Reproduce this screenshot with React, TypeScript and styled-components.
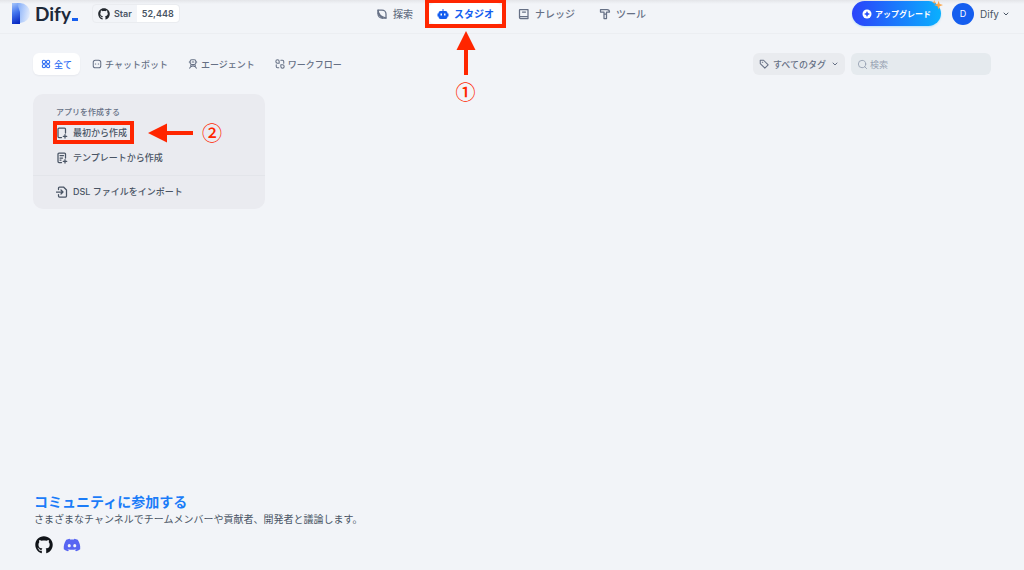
import React from "react";
import styled, { createGlobalStyle, css } from "styled-components";
import { FaGithub, FaDiscord } from "react-icons/fa";
import { ChevronDown, Search } from "lucide-react";

const GlobalStyle = createGlobalStyle`
  *, *::before, *::after { box-sizing: border-box; }
  body {
    margin: 0;
    background: #f2f4f8;
    color: #495464;
    font-family: Inter, "Noto Sans CJK JP", sans-serif;
    font-size: 9px;
  }
  button, input, select { font: inherit; color: inherit; }
  button { border: 0; background: none; padding: 0; cursor: pointer; }
  a { color: inherit; text-decoration: none; }
  svg { display: block; flex: none; }
`;

const red = "#ff2600";

const Page = styled.div`
  min-height: 100vh;
  display: flex;
  flex-direction: column;
`;

const Header = styled.header`
  display: grid;
  grid-template-columns: 1fr auto 1fr;
  align-items: start;
  height: 34px;
  padding: 0 14px 0 12px;
  border-bottom: 1px solid #eceef2;
  background: linear-gradient(#e4e5e9, #f2f4f8 4px);
`;

const HeaderSide = styled.div<{ $end?: boolean }>`
  display: flex;
  align-items: center;
  height: 27px;
  justify-content: ${(p) => (p.$end ? "flex-end" : "flex-start")};
`;

const Logo = styled.a`
  display: flex;
  align-items: center;
  gap: 5px;
  color: #1d2939;
  font-family: Lato, sans-serif;
  font-size: 19px;
  font-weight: 700;
  line-height: 24px;
`;

const LogoText = styled.span`
  display: flex;
  align-items: baseline;
  gap: 1px;
`;

const Cursor = styled.span`
  width: 6px;
  height: 3px;
  background: #155eef;
`;

const StarBadge = styled.a`
  display: flex;
  align-items: center;
  height: 19px;
  margin-left: 14px;
  border: 1px solid #eaecf0;
  border-radius: 4px;
  font-weight: 600;
  line-height: 17px;
  background: #f2f4f8;
`;

const StarLabel = styled.span`
  display: flex;
  align-items: center;
  gap: 4px;
  padding: 0 5px;
  svg { color: #24292f; }
`;

const StarCount = styled.span`
  padding: 0 5px;
  border-radius: 0 4px 4px 0;
  background: #fff;
`;

const Nav = styled.nav`
  display: flex;
  gap: 8px;
  padding-top: 3px;
`;

const NavItem = styled.a<{ $active?: boolean }>`
  position: relative;
  display: flex;
  align-items: center;
  gap: 5px;
  height: 21px;
  padding: 0 8px;
  border-radius: 6px;
  font-size: 10px;
  font-weight: 500;
  color: #667085;
  ${(p) =>
    p.$active &&
    css`
      background: #fff;
      color: #155eef;
      font-weight: 700;
    `}
`;

const UpgradeButton = styled.button`
  position: relative;
  display: flex;
  align-items: center;
  gap: 3px;
  height: 25px;
  margin-right: 11px;
  padding: 0 10px;
  border-radius: 13px;
  background: linear-gradient(90deg, #2b43fa, #0ab0fe);
  box-shadow: 0 1px 2px #0ab0fe40;
  color: #fff;
  font-size: 8px;
  font-weight: 600;
`;

const Sparkle = styled.svg`
  position: absolute;
  top: -2px;
  right: -2px;
`;

const Account = styled.button`
  display: flex;
  align-items: center;
  gap: 3px;
  font-size: 10px;
`;

const Avatar = styled.span`
  width: 22px;
  height: 22px;
  margin-right: 3px;
  border-radius: 50%;
  background: #155eef;
  color: #fff;
  font-size: 9px;
  line-height: 22px;
  text-align: center;
`;

const Toolbar = styled.div`
  display: flex;
  justify-content: space-between;
  padding: 19px 33px;
`;

const Group = styled.div<{ $gap: number }>`
  display: flex;
  gap: ${(p) => p.$gap}px;
`;

const Tab = styled.button<{ $active?: boolean }>`
  display: flex;
  align-items: center;
  gap: 3px;
  height: 22px;
  padding: 0 8px;
  border-radius: 6px;
  font-weight: 500;
  color: #667085;
  ${(p) =>
    p.$active &&
    css`
      background: #fff;
      box-shadow: 0 1px 2px #1018280d;
      color: #2b6cf3;
    `}
`;

const Field = styled.label<{ $search?: boolean }>`
  display: flex;
  align-items: center;
  gap: ${(p) => (p.$search ? 2 : 4)}px;
  width: ${(p) => (p.$search ? 140 : 92)}px;
  height: 22px;
  padding: 0 6px;
  border-radius: 6px;
  background: ${(p) => (p.$search ? "#e5eaee" : "#e9ebef")};
  color: ${(p) => (p.$search ? "#98a2b3" : "#667085")};
`;

const TagSelect = styled.select`
  flex: 1;
  min-width: 0;
  padding: 0;
  border: 0;
  appearance: none;
  background: none;
  font-weight: 500;
`;

const SearchInput = styled.input`
  flex: 1;
  min-width: 0;
  padding: 0;
  border: 0;
  background: none;
  &::placeholder { color: #98a2b3; }
`;

const Main = styled.main`
  flex: 1;
  display: grid;
  grid-template-columns: repeat(4, 1fr);
  align-items: start;
  gap: 10px;
  padding: 0 33px;
`;

const Card = styled.section`
  padding: 10px 0 5px;
  border-radius: 10px;
  background: #eaebf0;
`;

const CardTitle = styled.h2`
  margin: 0;
  padding: 0 23px;
  color: #667085;
  font-size: 8px;
  font-weight: 500;
  line-height: 16px;
`;

const CardAction = styled.button`
  position: relative;
  display: flex;
  align-items: center;
  gap: 5px;
  height: 25px;
  margin-left: 23px;
  padding-right: 4px;
  font-weight: 500;
`;

const Divider = styled.hr`
  margin: 5px 0 3px;
  border: 0;
  border-top: 1px solid #e3e5ea;
`;

const Footer = styled.footer`
  padding: 0 34px 16px;
`;

const FooterTitle = styled.h2`
  margin: 0;
  color: #1b7cf8;
  font-size: 14px;
  font-weight: 700;
  line-height: 18px;
`;

const FooterText = styled.p`
  margin: 0;
  font-size: 10px;
  line-height: 17px;
`;

const Socials = styled.div`
  display: flex;
  align-items: center;
  gap: 10px;
  padding: 8px 1px 0;
`;

/* Tutorial marks laid over the controls they point to */
const Frame = styled.span<{ $x: number; $y: number }>`
  position: absolute;
  inset: ${(p) => -p.$y}px ${(p) => -p.$x}px;
  border: 4px solid ${red};
  pointer-events: none;
`;

const Callout = styled.span<{ $side?: boolean }>`
  position: absolute;
  display: flex;
  align-items: center;
  color: ${red};
  font: 500 20px/20px "Noto Sans CJK JP", sans-serif;
  pointer-events: none;
  ${(p) =>
    p.$side
      ? css`
          left: 100%;
          top: 50%;
          gap: 9px;
          padding-left: 17px;
          transform: translateY(-50%);
        `
      : css`
          top: 100%;
          left: 50%;
          flex-direction: column;
          gap: 7px;
          padding-top: 7px;
          transform: translateX(-50%);
        `}
`;

const Line = ({ size = 10, children }: { size?: number; children: React.ReactNode }) => (
  <svg width={size} height={size} viewBox="0 0 24 24" fill="none" stroke="currentColor" strokeWidth="2.5" strokeLinecap="round" strokeLinejoin="round" aria-hidden="true">
    {children}
  </svg>
);

const LogoMark = () => (
  <svg width="18" height="21" viewBox="0 0 18 21" aria-hidden="true">
    <defs>
      <linearGradient id="bowl" x1="0" y1="0.3" x2="1" y2="0.5">
        <stop offset="0" stopColor="#5f94f5" />
        <stop offset="0.5" stopColor="#a3c2fa" />
        <stop offset="1" stopColor="#e3ecfc" />
      </linearGradient>
      <linearGradient id="stem" x1="0.3" y1="0" x2="0.5" y2="1">
        <stop offset="0" stopColor="#9dbff9" />
        <stop offset="0.45" stopColor="#4577ee" />
        <stop offset="1" stopColor="#0a2bc4" />
      </linearGradient>
    </defs>
    <path d="M0 0h8a10 10 0 0 1 0 20H0z" fill="url(#bowl)" />
    <path d="M0 0h5l3 9v12H0z" fill="url(#stem)" />
  </svg>
);

const ArrowUp = () => (
  <svg width="20" height="44" viewBox="0 0 20 44" fill={red} aria-hidden="true">
    <path d="M10 0l9.500 19H12v25H8V19H.5z" />
  </svg>
);

const ArrowLeft = () => (
  <svg width="45" height="20" viewBox="0 0 45 20" fill={red} aria-hidden="true">
    <path d="M0 10L19 .5V8h26v4H19v7.500z" />
  </svg>
);

export default function App() {
  return (
    <Page lang="ja">
      <GlobalStyle />
      <Header>
        <HeaderSide>
          <Logo href="#">
            <LogoMark />
            <LogoText>Dify<Cursor /></LogoText>
          </Logo>
          <StarBadge href="#">
            <StarLabel><FaGithub size={12} />Star</StarLabel>
            <StarCount>52,448</StarCount>
          </StarBadge>
        </HeaderSide>
        <Nav>
          <NavItem href="#">
            <Line size={12}>
              <path d="M4 4h8a8 8 0 0 1 8 8v8h-8a8 8 0 0 1-8-8z" />
              <path d="M4 4c0 6 5 13 16 16M4 10c2 5 5 8 9 10" />
            </Line>
            探索
          </NavItem>
          <NavItem href="#" $active>
            <svg width="12" height="12" viewBox="0 0 24 24" fill="currentColor" aria-hidden="true">
              <path fillRule="evenodd" d="M11 2h2v4h4a4 4 0 0 1 4 4v1h2v6h-2v1a4 4 0 0 1-4 4H7a4 4 0 0 1-4-4v-1H1v-6h2v-1a4 4 0 0 1 4-4h4zM7 11v4h3v-4zm7 0v4h3v-4z" />
            </svg>
            スタジオ
            <Frame $x={4} $y={4} />
            <Callout>
              <ArrowUp />
              ①
            </Callout>
          </NavItem>
          <NavItem href="#">
            <Line size={12}>
              <path d="M4 3h16v18H5a2 2 0 0 1-2-2V4a1 1 0 0 1 1-1zM4 17h16M9 8h6" />
            </Line>
            ナレッジ
          </NavItem>
          <NavItem href="#">
            <Line size={12}>
              <path d="M3 3h13c3 0 5 2 5 5h-6v13h-5V8H3zM10 12h5" />
            </Line>
            ツール
          </NavItem>
        </Nav>
        <HeaderSide $end>
          <UpgradeButton>
            <svg width="10" height="10" viewBox="0 0 20 20" aria-hidden="true">
              <circle cx="10" cy="10" r="9" fill="#fff" />
              <path d="M10 4l2 4 4 2-4 2-2 4-2-4-4-2 4-2z" fill="#2b52fa" />
            </svg>
            アップグレード
            <Sparkle width="11" height="11" viewBox="0 0 20 20" fill="#fba64b" aria-hidden="true">
              <path d="M12 3l2 6 6 2-6 2-2 6-2-6-6-2 6-2zM4 2l1 3 3 1-3 1-1 3-1-3-3-1 3-1z" />
            </Sparkle>
          </UpgradeButton>
          <Account>
            <Avatar>D</Avatar>
            Dify
            <ChevronDown size={8} strokeWidth={3} />
          </Account>
        </HeaderSide>
      </Header>

      <Toolbar>
        <Group $gap={4}>
          <Tab $active>
            <Line>
              <circle cx="7" cy="7" r="4" />
              <circle cx="17" cy="7" r="4" />
              <circle cx="7" cy="17" r="4" />
              <circle cx="17" cy="17" r="4" />
            </Line>
            全て
          </Tab>
          <Tab>
            <Line>
              <rect x="3" y="3" width="18" height="18" rx="5" />
              <path d="M8 12h1M15 12h1" />
            </Line>
            チャットボット
          </Tab>
          <Tab>
            <Line>
              <rect x="5" y="2" width="14" height="11" rx="4" />
              <path d="M3 7h2M19 7h2M10 7h4M12 13v4M4 22c1-3 4-5 8-5s7 2 8 5M6 16l3 2M18 16l-3 2" />
            </Line>
            エージェント
          </Tab>
          <Tab>
            <Line>
              <path d="M10 10H6a4 4 0 1 1 4-4zM14 14h4a4 4 0 1 1-4 4zM14 3h4a3 3 0 0 1 3 3v4M3 14v4a3 3 0 0 0 3 3h3" />
            </Line>
            ワークフロー
          </Tab>
        </Group>
        <Group $gap={6}>
          <Field>
            <Line>
              <path d="M3 3h8l11 11-8 8L3 11zM8 8h1" />
            </Line>
            <TagSelect aria-label="タグ">
              <option>すべてのタグ</option>
            </TagSelect>
            <ChevronDown size={8} strokeWidth={3} />
          </Field>
          <Field $search>
            <Search size={11} />
            <SearchInput type="text" aria-label="検索" placeholder="検索" />
          </Field>
        </Group>
      </Toolbar>

      <Main>
        <Card>
          <CardTitle>アプリを作成する</CardTitle>
          <CardAction>
            <Line size={12}>
              <path d="M11 21H6a2 2 0 0 1-2-2V4a2 2 0 0 1 2-2h11a2 2 0 0 1 2 2v8M18 15v7M14.500 18.500h7" />
            </Line>
            最初から作成
            <Frame $x={3} $y={-1} />
            <Callout $side>
              <ArrowLeft />
              ②
            </Callout>
          </CardAction>
          <CardAction>
            <Line size={12}>
              <path d="M11 21H6a2 2 0 0 1-2-2V4a2 2 0 0 1 2-2h11a2 2 0 0 1 2 2v8M18 15v7M14.500 18.500h7M8 7h7M8 12h5M8 16h2" />
            </Line>
            テンプレートから作成
          </CardAction>
          <Divider />
          <CardAction>
            <Line size={12}>
              <path d="M5 7V4a2 2 0 0 1 2-2h8l6 6v12a2 2 0 0 1-2 2H7a2 2 0 0 1-2-2v-3M1 12h13M10 8l4 4-4 4" />
            </Line>
            DSL ファイルをインポート
          </CardAction>
        </Card>
      </Main>

      <Footer>
        <FooterTitle>コミュニティに参加する</FooterTitle>
        <FooterText>さまざまなチャンネルでチームメンバーや貢献者、開発者と議論します。</FooterText>
        <Socials>
          <a href="#" aria-label="GitHub"><FaGithub size={18} color="#101318" /></a>
          <a href="#" aria-label="Discord"><FaDiscord size={18} color="#5865f2" /></a>
        </Socials>
      </Footer>
    </Page>
  );
}
